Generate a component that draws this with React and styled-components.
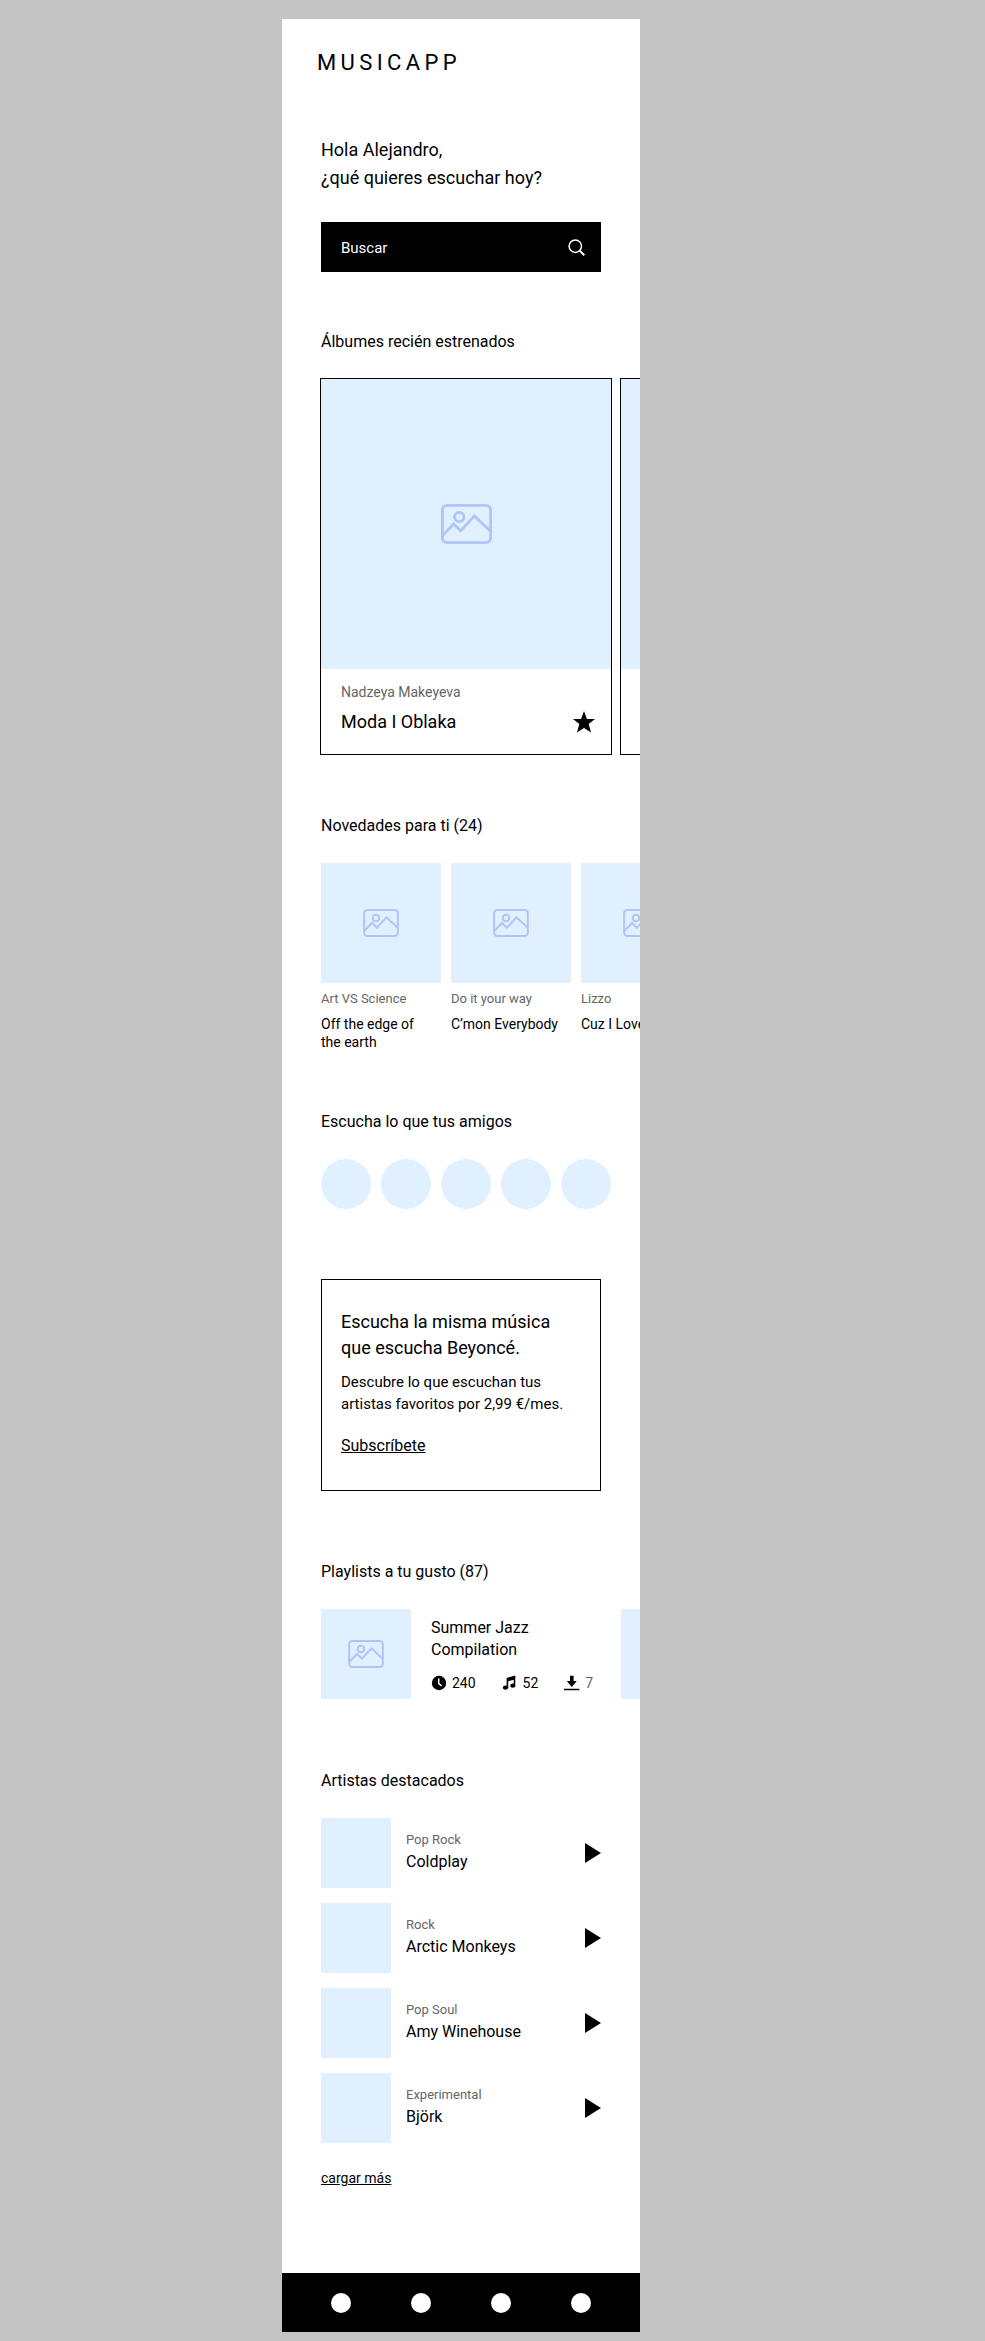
import React from "react";
import styled, { createGlobalStyle } from "styled-components";

const GlobalStyle = createGlobalStyle`
  *, *::before, *::after { box-sizing: border-box; }
  body {
    margin: 0;
    background: #c4c4c4;
    color: #000;
    font-family: Roboto, "Liberation Sans", sans-serif;
    font-size: 16px;
    line-height: 24px;
  }
  h1, h2, h3, p, ul { margin: 0; padding: 0; font-weight: 400; }
  ul { list-style: none; }
  button { border: 0; padding: 0; background: none; color: inherit; font: inherit; cursor: pointer; }
  a { color: inherit; }
  svg { display: block; flex: none; }
`;

const Canvas = styled.div`
  display: grid;
  grid-template-columns: 282fr minmax(0, 358px) 345fr;
  padding: 19px 0 9px;
`;

const Phone = styled.div`
  grid-column: 2;
  background: #fff;
  overflow: hidden;
`;

const Header = styled.header`
  padding: 30px 35px 59px;
`;

const Logo = styled.h1`
  font-size: 22px;
  line-height: 28px;
  letter-spacing: 0.2em;
`;

const Intro = styled.section`
  padding: 0 39px;
  margin-bottom: 58px;
`;

const Greeting = styled.p`
  font-size: 18px;
  line-height: 28px;
  margin-bottom: 30px;
`;

const SearchBar = styled.form`
  display: flex;
  align-items: center;
  height: 50px;
  padding: 0 16px 0 20px;
  background: #000;
  color: #fff;
`;

const SearchInput = styled.input`
  flex: 1;
  min-width: 0;
  height: 50px;
  padding: 2px 0 0;
  border: 0;
  outline: 0;
  background: transparent;
  color: #fff;
  font: inherit;
  font-size: 15px;
  &::placeholder { color: #fff; opacity: 1; }
`;

const Section = styled.section`
  margin-bottom: ${(p) => p.$after}px;
`;

const SectionTitle = styled.h2`
  padding: 0 39px;
  margin-bottom: 24px;
  font-size: 16px;
  line-height: 24px;
`;

const Scroller = styled.ul`
  display: flex;
  gap: 10px;
  padding: 1px 0 1px 39px;
  overflow-x: auto;
  scrollbar-width: none;
`;

const Cover = styled.div`
  display: flex;
  flex: none;
  align-items: center;
  justify-content: center;
  width: ${(p) => p.$size}px;
  height: ${(p) => p.$size}px;
  background: #e0f0ff;
  color: #b0c4f6;
`;

const AlbumCard = styled.li`
  flex: none;
  width: 290px;
  box-shadow: 0 0 0 1px #000;
`;

const AlbumInfo = styled.div`
  padding: 13px 16px 18px 20px;
`;

const AlbumArtist = styled.p`
  margin-bottom: 6px;
  color: #666;
  font-size: 14px;
  line-height: 20px;
`;

const AlbumRow = styled.div`
  display: flex;
  align-items: center;
  justify-content: space-between;
  height: 28px;
`;

const AlbumTitle = styled.h3`
  font-size: 18px;
  line-height: 28px;
`;

const ReleaseCard = styled.li`
  flex: none;
  width: 120px;
`;

const Caption = styled.p`
  color: #666;
  font-size: 13px;
  line-height: 16px;
`;

const ReleaseArtist = styled(Caption)`
  margin: 8px 0;
`;

const ReleaseTitle = styled.h3`
  max-width: 114px;
  font-size: 14px;
  line-height: 18px;
`;

const Friend = styled.button`
  display: block;
  width: 50px;
  height: 50px;
  border-radius: 50%;
  background: #e0f0ff;
`;

const Promo = styled.section`
  margin: 0 39px 69px;
  padding: 29px 16px 32px 19px;
  border: 1px solid #000;
`;

const PromoTitle = styled.h2`
  margin-bottom: 10px;
  font-size: 18px;
  line-height: 26px;
`;

const PromoText = styled.p`
  margin-bottom: 19px;
  font-size: 15px;
  line-height: 22px;
`;

const PromoLink = styled.a`
  display: block;
  width: max-content;
`;

const PlaylistCard = styled.li`
  display: flex;
  flex: none;
  gap: 20px;
  width: 290px;
`;

const PlaylistInfo = styled.div`
  padding-top: 8px;
`;

const PlaylistTitle = styled.h3`
  max-width: 120px;
  margin-bottom: 12px;
  font-size: 16px;
  line-height: 22px;
`;

const Stats = styled.ul`
  display: flex;
  gap: 26px;
`;

const Stat = styled.li`
  display: flex;
  align-items: center;
  gap: 5px;
  font-size: 14px;
  line-height: 20px;
  span { color: ${(p) => (p.$muted ? "#666" : "#000")}; }
`;

const ArtistList = styled.ul`
  display: flex;
  flex-direction: column;
  gap: 15px;
  padding: 1px 39px 0;
`;

const ArtistRow = styled.li`
  display: flex;
  align-items: center;
  gap: 15px;
`;

const ArtistInfo = styled.div`
  flex: 1;
`;

const ArtistName = styled.h3`
  font-size: 16px;
  line-height: 24px;
  margin-top: 2px;
`;

const LoadMore = styled.a`
  display: block;
  width: max-content;
  margin: 25px 39px 0;
  font-size: 14px;
  line-height: 20px;
`;

const BottomNav = styled.nav`
  display: flex;
  justify-content: space-between;
  padding: 20px 49px 19px;
  background: #000;
`;

const NavDot = styled.button`
  width: 20px;
  height: 20px;
  border-radius: 50%;
  background: #fff;
`;

const ImageIcon = ({ width, height }) => (
  <svg width={width} height={height} viewBox="0 0 51 40" fill="none" stroke="currentColor" strokeWidth="2.8" aria-hidden="true">
    <rect x="1.4" y="1.4" width="48.2" height="37.2" rx="4.5" />
    <circle cx="18.3" cy="13" r="4.7" />
    <path d="M1.5 31.5 12.7 20l7 6.7L33.3 12l16.4 15.2" />
  </svg>
);

const SearchIcon = () => (
  <svg width="17" height="17" viewBox="0 0 17 17" fill="none" stroke="currentColor" aria-hidden="true">
    <circle cx="7.3" cy="7.2" r="6.2" strokeWidth="1.5" />
    <path d="M11.7 11.6 16.3 16.2" strokeWidth="2" />
  </svg>
);

const StarIcon = () => (
  <svg width="22" height="22" viewBox="0 0 22 22" aria-hidden="true">
    <path d="M11 0 13.9 8H22l-6.3 5.1L18 21.6l-7-4.7-7 4.7 2.3-8.5L0 8h8.1z" />
  </svg>
);

const ClockIcon = () => (
  <svg width="16" height="16" viewBox="0 0 16 16" aria-hidden="true">
    <circle cx="8" cy="8" r="7.2" />
    <path d="M7.7 3.6V8.3L10.6 11" fill="none" stroke="#fff" strokeWidth="1.5" />
  </svg>
);

const NoteIcon = () => (
  <svg width="16" height="16" viewBox="0 0 16 16" aria-hidden="true">
    <path d="M4.6 3 13.3 .4v10.2h-1.6V4.7L6.2 6.3v6.2H4.6z" />
    <ellipse cx="3.6" cy="12.6" rx="2.7" ry="2.1" />
    <ellipse cx="10.8" cy="10.7" rx="2.6" ry="2.1" />
  </svg>
);

const DownloadIcon = () => (
  <svg width="16" height="16" viewBox="0 0 16 16" aria-hidden="true">
    <path d="M6 .8h3.6V6h3.2L7.8 12 2.8 6H6zM0 13.8h15.4v1.5H0z" />
  </svg>
);

const PlayIcon = () => (
  <svg width="16" height="20" viewBox="0 0 16 20" aria-hidden="true">
    <path d="M0 0 16 10 0 20z" />
  </svg>
);

const releases = [
  { artist: "Art VS Science", title: "Off the edge of the earth" },
  { artist: "Do it your way", title: "C’mon Everybody" },
  { artist: "Lizzo", title: "Cuz I Love You" },
];

const artists = [
  { genre: "Pop Rock", name: "Coldplay" },
  { genre: "Rock", name: "Arctic Monkeys" },
  { genre: "Pop Soul", name: "Amy Winehouse" },
  { genre: "Experimental", name: "Björk" },
];

const friends = [1, 2, 3, 4, 5];
const tabs = ["Inicio", "Explorar", "Biblioteca", "Perfil"];

export default function App() {
  return (
    <Canvas>
      <GlobalStyle />
      <Phone>
        <Header>
          <Logo>MUSICAPP</Logo>
        </Header>
        <main>
          <Intro>
            <Greeting>
              Hola Alejandro,
              <br />
              ¿qué quieres escuchar hoy?
            </Greeting>
            <SearchBar role="search" onSubmit={(e) => e.preventDefault()}>
              <SearchInput type="text" placeholder="Buscar" aria-label="Buscar" />
              <button type="submit" aria-label="Buscar">
                <SearchIcon />
              </button>
            </SearchBar>
          </Intro>

          <Section $after={59}>
            <SectionTitle>Álbumes recién estrenados</SectionTitle>
            <Scroller>
              <AlbumCard>
                <Cover $size={290}>
                  <ImageIcon width={51} height={40} />
                </Cover>
                <AlbumInfo>
                  <AlbumArtist>Nadzeya Makeyeva</AlbumArtist>
                  <AlbumRow>
                    <AlbumTitle>Moda I Oblaka</AlbumTitle>
                    <button type="button" aria-label="Favorito">
                      <StarIcon />
                    </button>
                  </AlbumRow>
                </AlbumInfo>
              </AlbumCard>
              <AlbumCard>
                <Cover $size={290} />
              </AlbumCard>
            </Scroller>
          </Section>

          <Section $after={58}>
            <SectionTitle>Novedades para ti (24)</SectionTitle>
            <Scroller>
              {releases.map((r) => (
                <ReleaseCard key={r.title}>
                  <Cover $size={120}>
                    <ImageIcon width={36} height={28} />
                  </Cover>
                  <ReleaseArtist>{r.artist}</ReleaseArtist>
                  <ReleaseTitle>{r.title}</ReleaseTitle>
                </ReleaseCard>
              ))}
            </Scroller>
          </Section>

          <Section $after={69}>
            <SectionTitle>Escucha lo que tus amigos</SectionTitle>
            <Scroller>
              {friends.map((n) => (
                <li key={n}>
                  <Friend type="button" aria-label={`Amigo ${n}`} />
                </li>
              ))}
            </Scroller>
          </Section>

          <Promo>
            <PromoTitle>Escucha la misma música que escucha Beyoncé.</PromoTitle>
            <PromoText>Descubre lo que escuchan tus artistas favoritos por 2,99 €/mes.</PromoText>
            <PromoLink href="#subscribete">Subscríbete</PromoLink>
          </Promo>

          <Section $after={69}>
            <SectionTitle>Playlists a tu gusto (87)</SectionTitle>
            <Scroller>
              <PlaylistCard>
                <Cover $size={90}>
                  <ImageIcon width={36} height={28} />
                </Cover>
                <PlaylistInfo>
                  <PlaylistTitle>Summer Jazz Compilation</PlaylistTitle>
                  <Stats>
                    <Stat>
                      <ClockIcon />
                      <span>240</span>
                    </Stat>
                    <Stat>
                      <NoteIcon />
                      <span>52</span>
                    </Stat>
                    <Stat $muted>
                      <DownloadIcon />
                      <span>7</span>
                    </Stat>
                  </Stats>
                </PlaylistInfo>
              </PlaylistCard>
              <PlaylistCard>
                <Cover $size={90} />
              </PlaylistCard>
            </Scroller>
          </Section>

          <Section $after={85}>
            <SectionTitle>Artistas destacados</SectionTitle>
            <ArtistList>
              {artists.map((a) => (
                <ArtistRow key={a.name}>
                  <Cover $size={70} />
                  <ArtistInfo>
                    <Caption>{a.genre}</Caption>
                    <ArtistName>{a.name}</ArtistName>
                  </ArtistInfo>
                  <button type="button" aria-label={`Reproducir ${a.name}`}>
                    <PlayIcon />
                  </button>
                </ArtistRow>
              ))}
            </ArtistList>
            <LoadMore href="#artistas">cargar más</LoadMore>
          </Section>
        </main>
        <BottomNav>
          {tabs.map((t) => (
            <NavDot key={t} type="button" aria-label={t} />
          ))}
        </BottomNav>
      </Phone>
    </Canvas>
  );
}
